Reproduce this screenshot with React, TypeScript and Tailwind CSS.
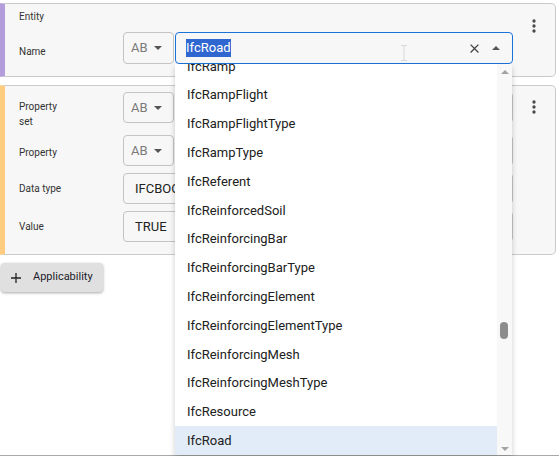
import React from "react";

const items = [
  "IfcRamp",
  "IfcRampFlight",
  "IfcRampFlightType",
  "IfcRampType",
  "IfcReferent",
  "IfcReinforcedSoil",
  "IfcReinforcingBar",
  "IfcReinforcingBarType",
  "IfcReinforcingElement",
  "IfcReinforcingElementType",
  "IfcReinforcingMesh",
  "IfcReinforcingMeshType",
  "IfcResource",
  "IfcRoad",
];

function Kebab() {
  return (
    <svg width="20" height="20" viewBox="0 0 24 24" fill="#4a4a4a">
      <circle cx="12" cy="6" r="2" />
      <circle cx="12" cy="12" r="2" />
      <circle cx="12" cy="18" r="2" />
    </svg>
  );
}

function Caret({ up = false, color = "#555" }: { up?: boolean; color?: string }) {
  return (
    <svg width="8" height="4" viewBox="0 0 8 4" fill={color}>
      {up ? <path d="M0 4L4 0L8 4Z" /> : <path d="M0 0H8L4 4Z" />}
    </svg>
  );
}

function AB() {
  return (
    <div className="w-[51px] h-full border border-[#c4c4c4] rounded-[4px] flex items-center pl-[7px] gap-[6px] shrink-0">
      <span className="text-[13px] text-[#7a7a7a]">AB</span>
      <Caret />
    </div>
  );
}

function Label({ children }: { children: React.ReactNode }) {
  return (
    <div className="w-[104px] shrink-0 text-[10px] leading-[15px] text-[#333]">
      <div className="max-w-[52px]">{children}</div>
    </div>
  );
}

export default function App() {
  return (
    <div
      className="relative w-[559px] h-[456px] bg-white border-b border-[#a9a9a9] pt-[3px]"
      style={{ fontFamily: "Roboto, 'Liberation Sans', Arial, sans-serif" }}
    >
      {/* Card 1 */}
      <div className="w-[556px] flex bg-[#f7f7f7] border border-[#cacaca] border-l-[5px] border-l-[#b39ddb] rounded-r-[5px]">
        <div className="flex-1 pl-[14px] pt-[6px] pb-[12px]">
          <div className="text-[10px] leading-[14px] text-[#333]">Entity</div>
          <div className="mt-[8px] h-[32px] flex items-center">
            <Label>
              <div className="pt-[6px]">Name</div>
            </Label>
            <AB />
            <div className="ml-[1px] w-[338px] h-full border border-[#1a73d8] rounded-[4px] flex items-center pl-[10px] pr-[12px]">
              <span className="text-[13px] leading-[18px] bg-[#2f66d0] text-white">IfcRoad</span>
              <div className="flex-1" />
              <svg width="15" height="15" viewBox="0 0 24 24" fill="#444">
                <path d="M19 6.41 17.59 5 12 10.59 6.41 5 5 6.41 10.59 12 5 17.59 6.41 19 12 13.41 17.59 19 19 17.59 13.41 12z" />
              </svg>
              <div className="ml-[10px]">
                <Caret up />
              </div>
            </div>
          </div>
        </div>
        <div className="w-[42px] flex justify-center pt-[12px]">
          <Kebab />
        </div>
      </div>

      {/* Card 2 */}
      <div className="mt-[8px] w-[556px] flex bg-[#f7f7f7] border border-[#cacaca] border-l-[5px] border-l-[#ffcc80] rounded-r-[5px]">
        <div className="flex-1 pl-[14px] pt-[6px] pb-[12px] flex flex-col">
          <div className="h-[31px] flex items-center">
            <Label>
              <div className="pt-[12px]">Property set</div>
            </Label>
            <AB />
            <div className="ml-[1px] w-[338px] h-full border border-[#c4c4c4] rounded-[4px]" />
          </div>
          <div className="mt-[12px] h-[31px] flex items-center">
            <Label>
              <div className="pt-[4px]">Property</div>
            </Label>
            <AB />
            <div className="ml-[1px] w-[338px] h-full border border-[#c4c4c4] rounded-[4px]" />
          </div>
          <div className="mt-[7px] h-[31px] flex items-center">
            <Label>Data type</Label>
            <div className="w-[390px] h-full border border-[#c4c4c4] rounded-[4px] flex items-center pl-[11px] text-[13px] text-[#222]">
              IFCBOOLEAN
            </div>
          </div>
          <div className="mt-[7px] h-[31px] flex items-center">
            <Label>Value</Label>
            <div className="w-[390px] h-full border border-[#c4c4c4] rounded-[4px] flex items-center pl-[11px] text-[13px] text-[#222]">
              TRUE
            </div>
          </div>
        </div>
        <div className="w-[42px] flex justify-center pt-[11px]">
          <Kebab />
        </div>
      </div>

      {/* Button */}
      <button className="mt-[8px] ml-[1px] w-[102px] h-[29px] rounded-[4px] bg-[#e0e0e0] shadow-[0_1px_3px_rgba(0,0,0,0.35)] flex items-center pl-[10px] gap-[12px] text-[11px] font-normal text-[#1c1c2a]">
        <svg width="10" height="10" viewBox="0 0 10 10" stroke="#222" strokeWidth="1.3">
          <path d="M5 0V10M0 5H10" />
        </svg>
        <span>Applicability</span>
      </button>

      {/* Dropdown overlay */}
      <div className="absolute left-[175px] top-[64px] w-[337px] h-[391px] bg-white shadow-[0_3px_6px_rgba(0,0,0,0.2)] flex overflow-hidden z-10">
        <div className="flex-1 overflow-hidden">
          <ul className="-mt-[12px]">
            {items.map((it) => (
              <li
                key={it}
                className={
                  "h-[28.8px] flex items-center pl-[12px] text-[13px] text-[#212121] " +
                  (it === "IfcRoad" ? "bg-[#e2ecf8]" : "")
                }
              >
                {it}
              </li>
            ))}
          </ul>
        </div>
        <div className="relative w-[15px] bg-[#f8f8f8] flex flex-col items-center justify-between pt-[6px] pb-[4px]">
          <Caret up color="#a3a3a3" />
          <Caret color="#a3a3a3" />
          <div className="absolute left-[3px] top-[258px] w-[8px] h-[17px] rounded-full bg-[#8c8c8c]" />
        </div>
      </div>

      {/* I-beam mouse cursor */}
      <svg className="absolute left-[401px] top-[45px] z-20" width="6" height="16" viewBox="0 0 6 16" stroke="#d8d8d8" strokeWidth="1" fill="none">
        <path d="M0 0.5H6M0 15.5H6M3 0.5V15.5" />
      </svg>
    </div>
  );
}
